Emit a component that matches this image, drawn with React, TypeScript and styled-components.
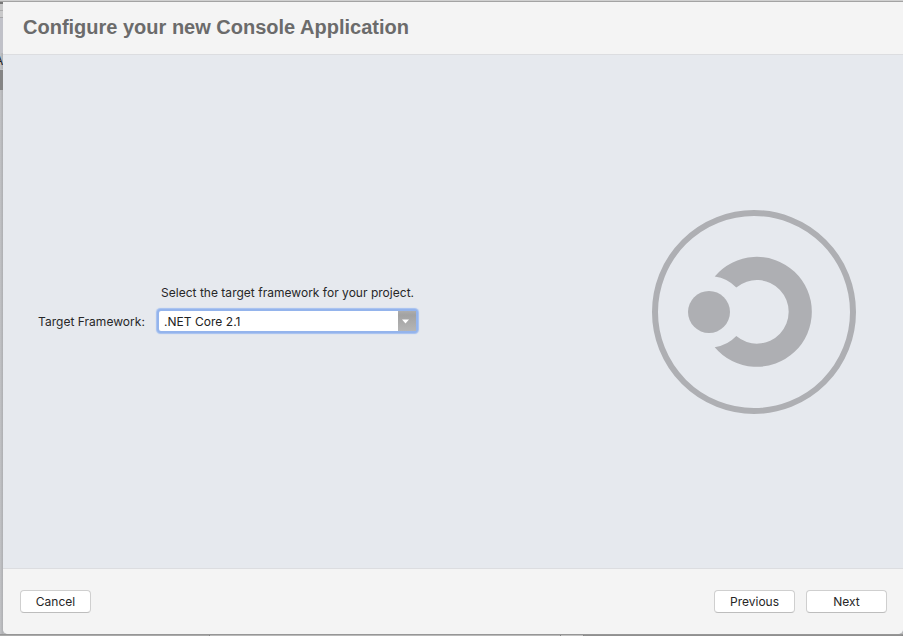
import React from "react";
import styled, { createGlobalStyle } from "styled-components";

const GlobalStyle = createGlobalStyle`
  * { box-sizing: border-box; }
  body { margin: 0; overflow: hidden; font-family: Inter, "Liberation Sans", sans-serif; }
`;

const Desktop = styled.div`
  width: 903px;
  height: 636px;
  display: grid;
  grid-template-columns: 3px 900px;
  grid-template-rows: 2px 632px 2px;
  background: #b9babc;
  overflow: hidden;
`;

const TopEdge = styled.div`
  grid-column: 1 / 3;
  background: #d0d0d0;
  border-bottom: 1px solid #a3a3a3;
`;

const LeftEdge = styled.div`
  display: flex;
  flex-direction: column;
  overflow: hidden;
  background: linear-gradient(90deg, #c2c3c6, #aeafb2);
`;

const EdgeBand = styled.div<{ $height: number; $color: string }>`
  flex: none;
  height: ${(p) => p.$height}px;
  background: ${(p) => p.$color};
`;

const EdgeLetter = styled.div`
  flex: none;
  height: 16px;
  width: 10px;
  margin-left: -5px;
  font-size: 12px;
  line-height: 15px;
  color: #222;
`;

const BottomEdge = styled.div`
  grid-column: 1 / 3;
  display: grid;
  grid-template-columns: 210px 351px 23px 1fr;
  border-top: 1px solid #969696;
`;

const BottomBand = styled.div<{ $color: string }>`
  background: ${(p) => p.$color};
  border-right: 1px solid #858585;
`;

const Dialog = styled.main`
  display: grid;
  grid-template-rows: 53px 513px 66px;
  background: #e6e9ee;
  border-radius: 0 0 5px 5px;
  overflow: hidden;
`;

const Header = styled.header`
  background: #f4f4f4;
  border-bottom: 1px solid #dcdde0;
  padding: 13px 0 0 20px;
`;

const Title = styled.h1`
  margin: 0;
  font: bold 20px/24px "Liberation Sans", Arial, sans-serif;
  color: #6b6b6b;
  white-space: nowrap;
`;

const Body = styled.section`
  display: flex;
  justify-content: space-between;
  align-items: flex-start;
`;

const Form = styled.div`
  display: grid;
  grid-template-columns: 107px 262px;
  grid-template-rows: 20px 24px;
  column-gap: 12px;
  row-gap: 6px;
  margin: 228px 0 0 35px;
`;

const Hint = styled.div`
  grid-column: 2;
  padding-left: 4px;
  font-size: 12px;
  line-height: 20px;
  letter-spacing: 0.02px;
  color: #262728;
  white-space: nowrap;
`;

const Label = styled.label`
  font-size: 12px;
  line-height: 25px;
  letter-spacing: 0.03px;
  color: #262728;
  white-space: nowrap;
`;

const Combo = styled.div`
  display: flex;
  width: 261px;
  height: 24px;
  border: 2px solid #94b4ec;
  border-radius: 4px;
  background: #fff;
  box-shadow: 0 0 1px 0.5px #a3bff0;
`;

const ComboValue = styled.span`
  flex: 1;
  padding-left: 5px;
  font-size: 12px;
  line-height: 21px;
  letter-spacing: 0.03px;
  color: #222;
`;

const ComboArrow = styled.span`
  display: flex;
  align-items: center;
  width: 18px;
  padding: 1px 0 0 4px;
  background: linear-gradient(#adadad, #a2a2a2 20%, #b5b5b5);
`;

const Emblem = styled.svg`
  display: block;
  width: 206px;
  height: 206px;
  margin: 154px 46px 0 0;
`;

const Footer = styled.footer`
  display: flex;
  align-items: flex-start;
  gap: 11px;
  padding: 21px 16px 0 17px;
  background: #f4f4f4;
  border-top: 1px solid #dcdde0;
`;

const Spacer = styled.div`
  flex: 1;
`;

const Button = styled.button<{ $width: number }>`
  width: ${(p) => p.$width}px;
  height: 23px;
  padding: 0;
  border: 1px solid #cfcfcf;
  border-bottom-color: #bdbdbd;
  border-radius: 4px;
  background: #fff;
  font: 12px/20px Inter, "Liberation Sans", sans-serif;
  color: #262626;
`;

export default function App() {
  return (
    <>
      <GlobalStyle />
      <Desktop>
        <TopEdge />
        <LeftEdge>
          <EdgeBand $height={2} $color="#777" />
          <EdgeBand $height={6} $color="#c7c7c8" />
          <EdgeBand $height={1} $color="#acacad" />
          <EdgeBand $height={6} $color="#c9c9ca" />
          <EdgeBand $height={1} $color="#a5a5a7" />
          <EdgeBand $height={35} $color="#c0c1c8" />
          <EdgeLetter>A</EdgeLetter>
          <EdgeBand $height={1} $color="#c0c1c4" />
          <EdgeBand $height={20} $color="#858585" />
        </LeftEdge>
        <Dialog>
          <Header>
            <Title>Configure your new Console Application</Title>
          </Header>
          <Body>
            <Form>
              <Hint>Select the target framework for your project.</Hint>
              <Label>Target Framework:</Label>
              <Combo role="combobox" aria-label="Target Framework">
                <ComboValue>.NET Core 2.1</ComboValue>
                <ComboArrow>
                  <svg width="7" height="5" viewBox="0 0 7 5">
                    <path d="M0 0.5H7L3.5 4.5Z" fill="#fff" />
                  </svg>
                </ComboArrow>
              </Combo>
            </Form>
            <Emblem viewBox="651 209 206 206">
              <circle cx="754" cy="312" r="99" fill="none" stroke="#aeafb3" strokeWidth="6" />
              <circle cx="709" cy="312" r="21" fill="#aeafb3" />
              <path
                d="M714.7 276.5A55 55 0 1 1 714.7 347.2A36 36 0 0 0 736.3 336.1A31.8 31.8 0 1 0 736.3 287.6A36 36 0 0 0 714.7 276.5Z"
                fill="#aeafb3"
              />
            </Emblem>
          </Body>
          <Footer>
            <Button $width={71}>Cancel</Button>
            <Spacer />
            <Button $width={81}>Previous</Button>
            <Button $width={81}>Next</Button>
          </Footer>
        </Dialog>
        <BottomEdge>
          <BottomBand $color="#aaaaaa" />
          <BottomBand $color="#bababa" />
          <BottomBand $color="#c3c3c3" />
          <BottomBand $color="#909090" />
        </BottomEdge>
      </Desktop>
    </>
  );
}
